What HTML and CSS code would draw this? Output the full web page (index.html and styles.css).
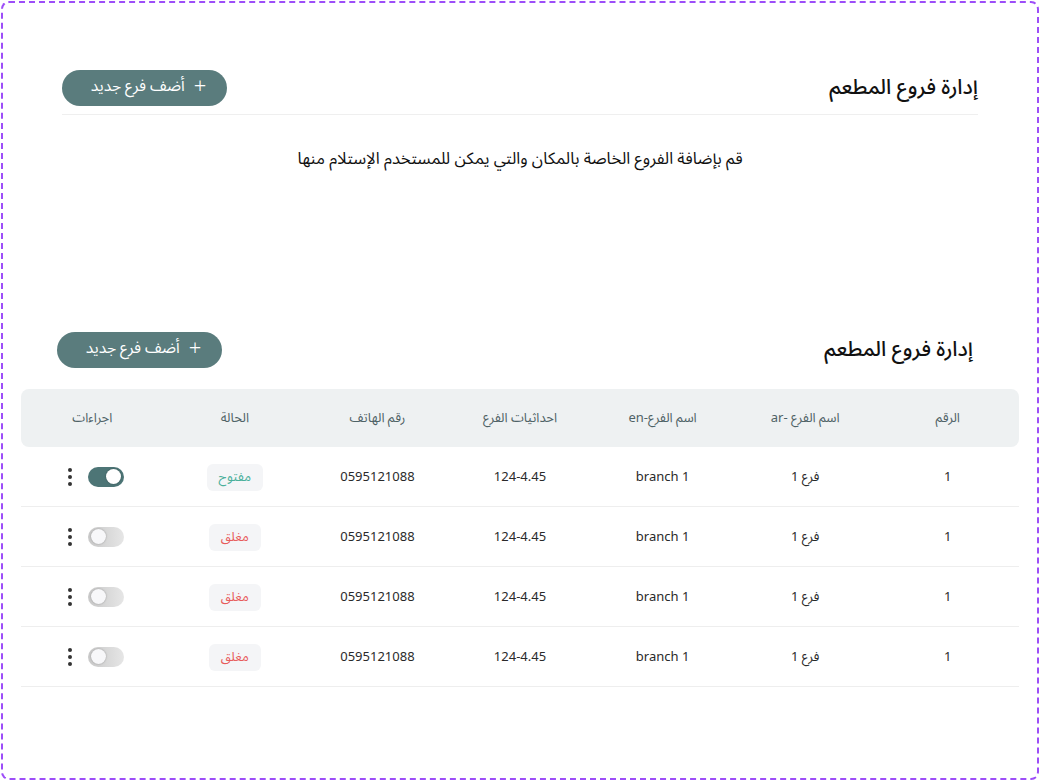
FILE: index.html
```html
<!DOCTYPE html>
<html lang="ar" dir="rtl">
<head>
<meta charset="utf-8">
<title>إدارة فروع المطعم</title>
<link rel="stylesheet" href="styles.css">
</head>
<body>
<div class="frame">
  <section class="intro">
    <div class="head-row">
      <h2 class="title">إدارة فروع المطعم</h2>
      <button class="add-btn"><span class="plus">+</span>أضف فرع جديد</button>
    </div>
    <div class="divider"></div>
    <p class="desc">قم بإضافة الفروع الخاصة بالمكان والتي يمكن للمستخدم الإستلام منها</p>
  </section>

  <section class="branches">
    <div class="head-row head-row2">
      <h2 class="title">إدارة فروع المطعم</h2>
      <button class="add-btn"><span class="plus">+</span>أضف فرع جديد</button>
    </div>
    <div class="table">
      <div class="thead">
        <div>الرقم</div>
        <div>اسم الفرع -ar</div>
        <div>اسم الفرع-en</div>
        <div>احداثيات الفرع</div>
        <div>رقم الهاتف</div>
        <div>الحالة</div>
        <div>اجراءات</div>
      </div>
      <div class="trow">
        <div>1</div><div>فرع 1</div><div class="ltr">branch 1</div><div class="ltr">124-4.45</div><div class="ltr">0595121088</div>
        <div><span class="badge open">مفتوح</span></div>
        <div class="actions"><span class="toggle on"><span class="knob"></span></span><span class="kebab"><i></i><i></i><i></i></span></div>
      </div>
      <div class="trow">
        <div>1</div><div>فرع 1</div><div class="ltr">branch 1</div><div class="ltr">124-4.45</div><div class="ltr">0595121088</div>
        <div><span class="badge closed">مغلق</span></div>
        <div class="actions"><span class="toggle"><span class="knob"></span></span><span class="kebab"><i></i><i></i><i></i></span></div>
      </div>
      <div class="trow">
        <div>1</div><div>فرع 1</div><div class="ltr">branch 1</div><div class="ltr">124-4.45</div><div class="ltr">0595121088</div>
        <div><span class="badge closed">مغلق</span></div>
        <div class="actions"><span class="toggle"><span class="knob"></span></span><span class="kebab"><i></i><i></i><i></i></span></div>
      </div>
      <div class="trow">
        <div>1</div><div>فرع 1</div><div class="ltr">branch 1</div><div class="ltr">124-4.45</div><div class="ltr">0595121088</div>
        <div><span class="badge closed">مغلق</span></div>
        <div class="actions"><span class="toggle"><span class="knob"></span></span><span class="kebab"><i></i><i></i><i></i></span></div>
      </div>
    </div>
  </section>
</div>
</body>
</html>
```
FILE: styles.css
```css
* { box-sizing: border-box; }
html, body { margin: 0; padding: 0; background: #fff; }
body {
  font-family: "Noto Sans Arabic", "Noto Sans", "DejaVu Sans", sans-serif;
  color: #222;
}
.frame {
  margin: 1px;
  height: 779px;
  border: 2px dashed #9d4ef8;
  border-radius: 8px;
}
.intro {
  padding: 67px 59px 0 59px;
}
.head-row {
  display: flex;
  align-items: center;
  justify-content: space-between;
}
.title {
  margin: 0;
  font-size: 21px;
  line-height: 1.2;
  font-weight: 500;
  color: #111;
}
.add-btn {
  display: flex;
  align-items: center;
  gap: 9px;
  height: 36px;
  width: 165px;
  justify-content: center;
  border: none;
  border-radius: 18px;
  background: #5a7c7d;
  color: #fff;
  font-family: inherit;
  font-size: 15.5px;
  line-height: 1;
  cursor: pointer;
  padding: 0 0 2px 8px;
}
.plus {
  font-size: 22px;
  font-weight: 300;
  line-height: 1;
}
.divider {
  margin-top: 8px;
  border-top: 1.5px solid #efefef;
}
.desc {
  margin: 33px 0 0;
  text-align: center;
  font-size: 16.5px;
  line-height: 22px;
  color: #111;
}
.branches {
  margin-top: 162px;
  padding: 0 18px;
}
.head-row2 {
  padding-inline-start: 46px;
  padding-inline-end: 36px;
}
.table {
  margin-top: 21px;
}
.thead, .trow {
  display: grid;
  grid-template-columns: repeat(7, 1fr);
  align-items: center;
  text-align: center;
}
.thead {
  height: 58px;
  background: #eef1f2;
  border-radius: 8px;
  font-size: 13px;
  color: #4e6266;
}
.trow {
  height: 60px;
  border-bottom: 1.5px solid #eeeeee;
  font-size: 13px;
  color: #2a2a2a;
}
.ltr { direction: ltr; }
.badge {
  display: inline-block;
  padding: 4px 12px;
  border-radius: 6px;
  background: #f4f5f7;
  font-size: 13px;
  line-height: 19px;
}
.badge.open { color: #4ab09b; }
.badge.closed { color: #e85c5c; }
.actions {
  display: flex;
  align-items: center;
  justify-content: center;
  gap: 16px;
  padding-left: 8px;
}
.toggle {
  position: relative;
  display: inline-block;
  width: 36px;
  height: 20px;
  border-radius: 10px;
  background: linear-gradient(90deg, #c9c9c9, #e6e6e6);
}
.toggle .knob {
  position: absolute;
  top: 2.5px;
  left: 3px;
  width: 15px;
  height: 15px;
  border-radius: 50%;
  background: #f7f7f9;
  box-shadow: 0 0 2px rgba(0,0,0,0.3);
}
.toggle.on {
  background: #4d7576;
}
.toggle.on .knob {
  left: auto;
  right: 3px;
  background: #fff;
}
.kebab {
  display: flex;
  flex-direction: column;
  gap: 3px;
}
.kebab i {
  display: block;
  width: 4px;
  height: 4px;
  border-radius: 50%;
  background: #333;
}
```
